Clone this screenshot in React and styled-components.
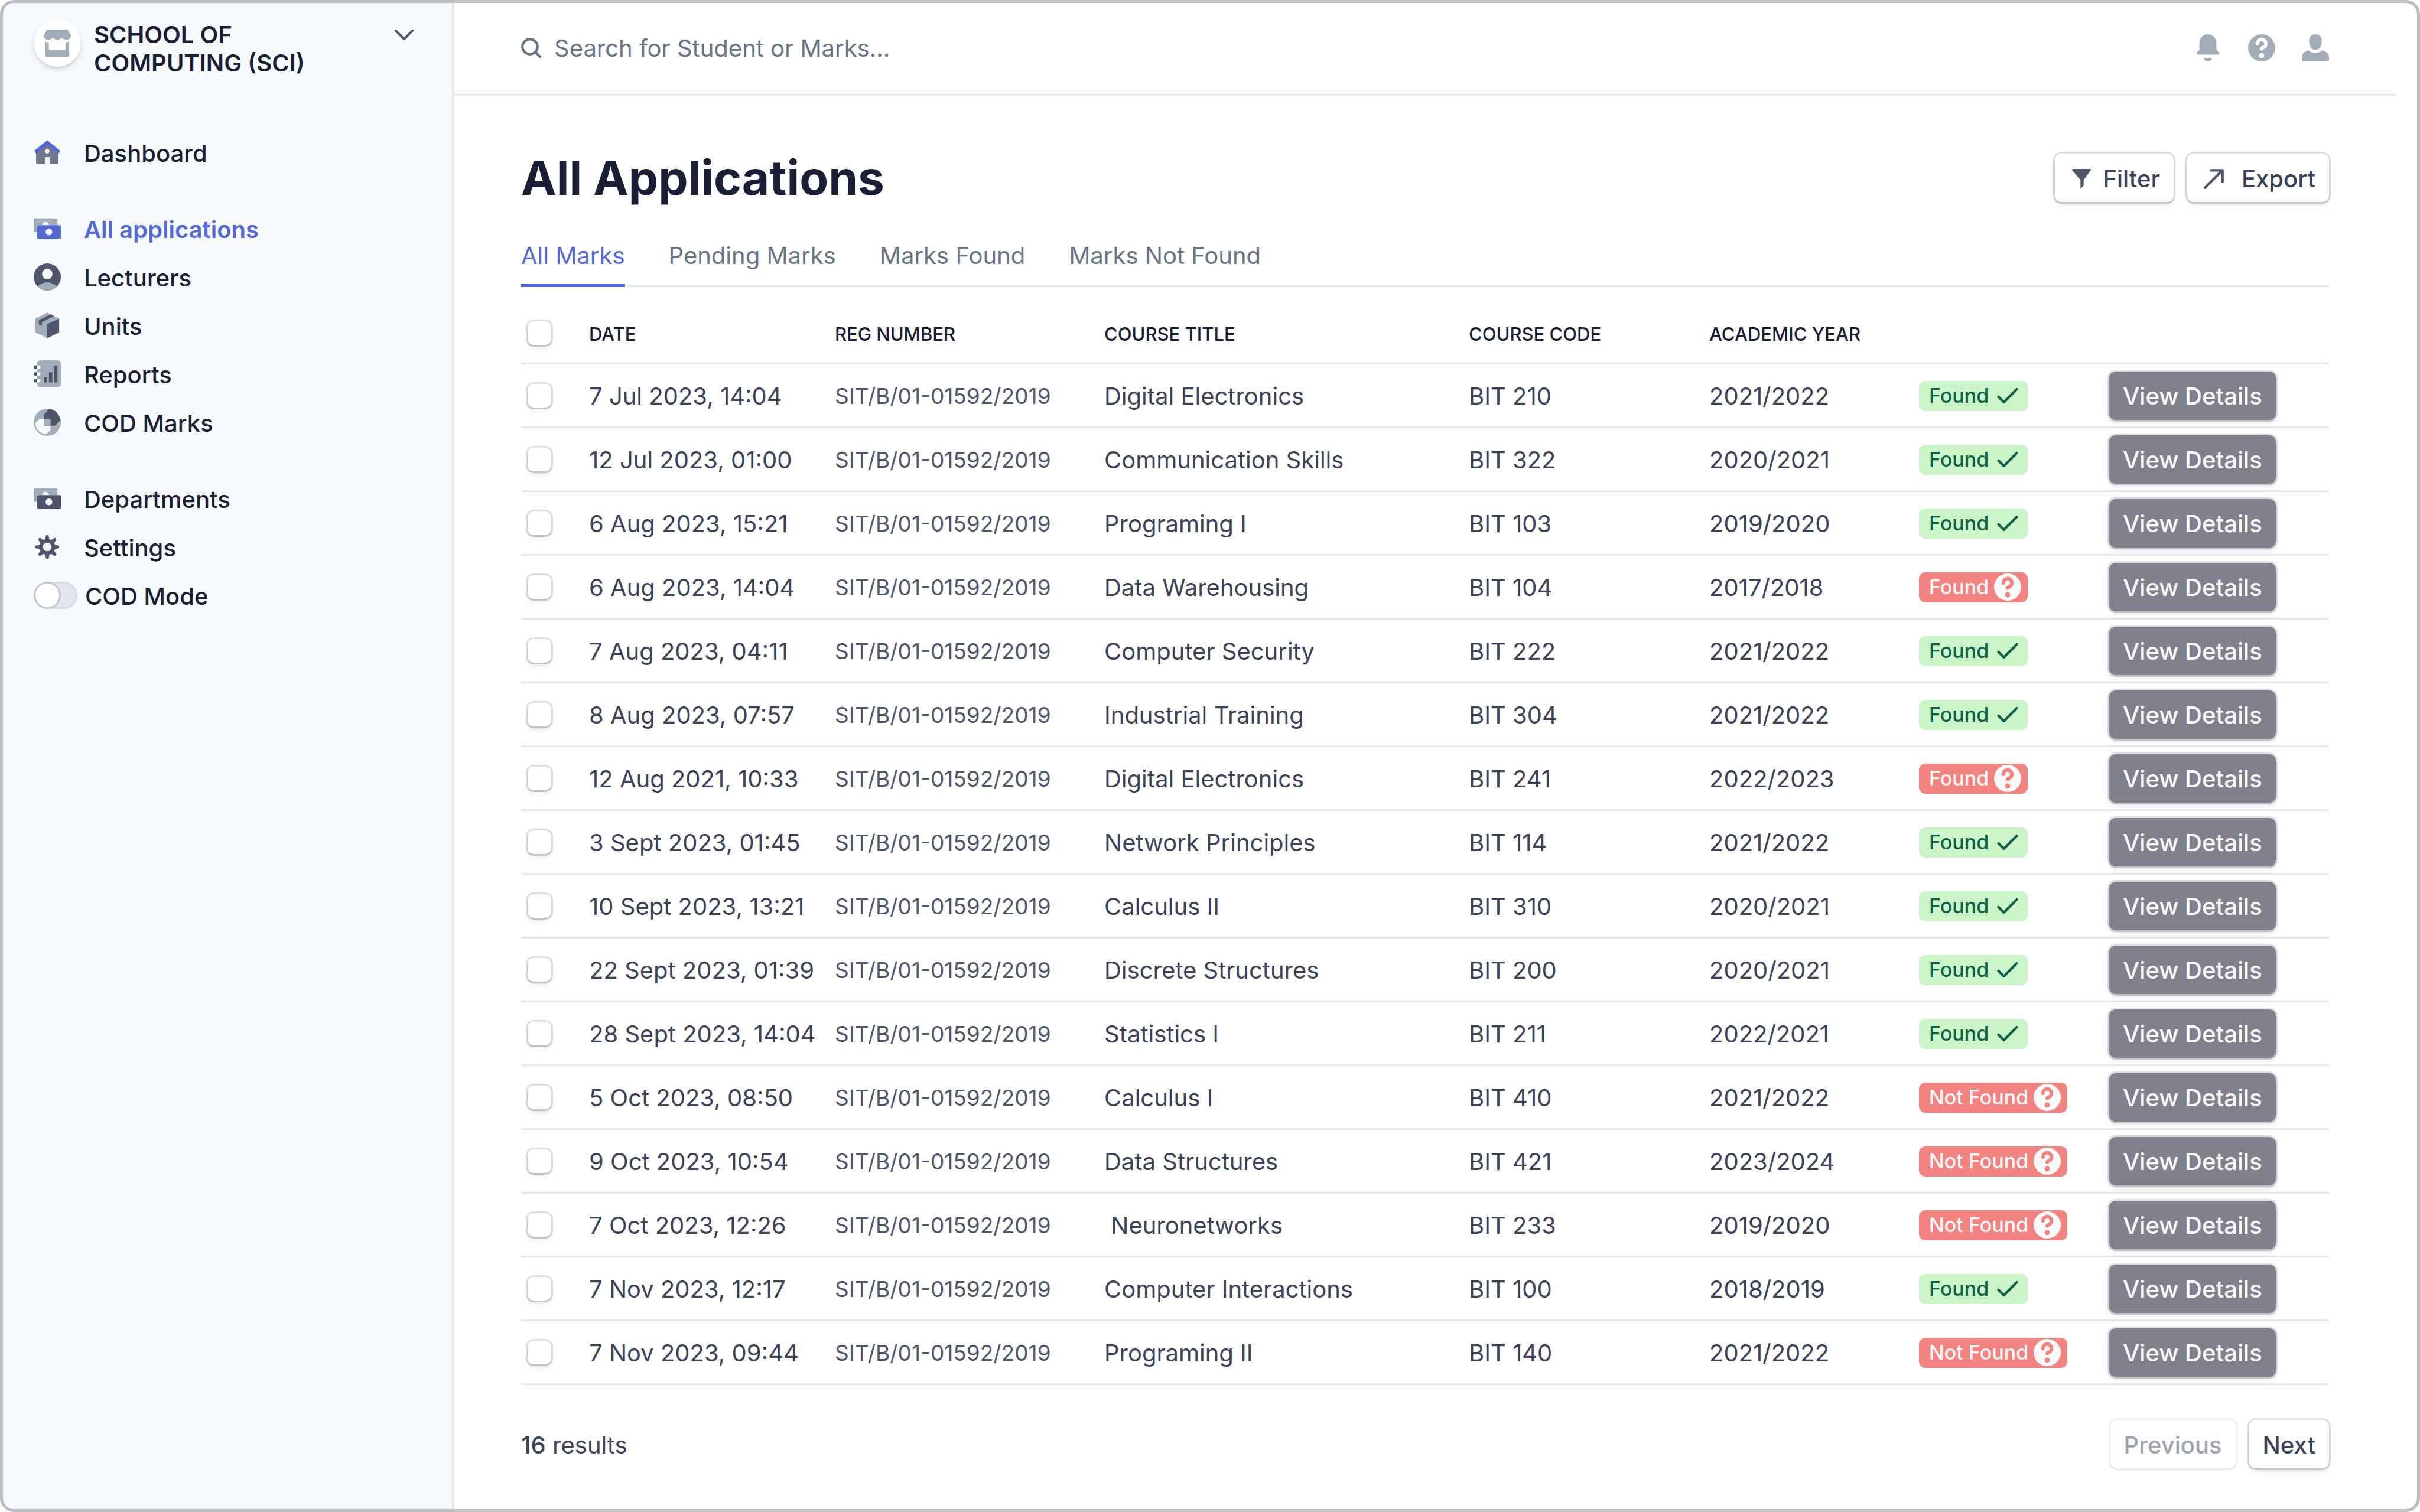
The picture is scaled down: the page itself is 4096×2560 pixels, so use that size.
import React from "react";
import styled, { createGlobalStyle, css } from "styled-components";

const color = {
  ink: "#1a1f36",
  text: "#3c4257",
  muted: "#4f566b",
  soft: "#697386",
  icon: "#a3acb9",
  line: "#e3e8ee",
  brand: "#5469d4",
};

const GlobalStyle = createGlobalStyle`
  *, *::before, *::after { box-sizing: border-box; }
  body {
    margin: 0;
    background: #ffffff;
    color: ${color.text};
    font-family: Inter, "Liberation Sans", sans-serif;
    font-size: 40px;
    line-height: 48px;
  }
  button, input { font: inherit; color: inherit; margin: 0; }
  a { color: inherit; text-decoration: none; }
`;

const outline = css`
  box-shadow: 0 0 0 3px rgba(60, 66, 87, 0.16), 0 3px 3px rgba(0, 0, 0, 0.12),
    0 6px 14px rgba(60, 66, 87, 0.08);
`;

const Frame = styled.div`
  display: flex;
  min-height: 100vh;
  border: 5px solid #bdbdbd;
  border-radius: 24px;
  overflow: hidden;
`;

const Sidebar = styled.aside`
  flex: none;
  width: 763px;
  padding: 28px 64px 28px 52px;
  background: #f6fafd;
  border-right: 3px solid ${color.line};
`;

const School = styled.button`
  display: flex;
  align-items: flex-start;
  width: 100%;
  height: 184px;
  padding: 0;
  border: 0;
  background: none;
  color: ${color.ink};
  font-weight: 600;
  text-align: left;
`;

const Avatar = styled.span`
  display: flex;
  flex: none;
  align-items: center;
  justify-content: center;
  width: 80px;
  height: 80px;
  margin-right: 22px;
  border-radius: 50%;
  background: #ffffff;
  box-shadow: 0 3px 4px rgba(0, 0, 0, 0.12), 0 6px 14px rgba(60, 66, 87, 0.08);
`;

const SchoolName = styled.span`
  flex: 1;
  max-width: 400px;
  padding-top: 2px;
`;

const ChevronSlot = styled.span`
  display: flex;
  align-items: center;
  height: 52px;
  margin-left: auto;
`;

const Nav = styled.nav`
  display: flex;
  flex-direction: column;
  gap: 47px;
`;

const NavGroup = styled.ul`
  margin: 0;
  padding: 0;
  list-style: none;
`;

const NavItem = styled.li`
  display: flex;
  align-items: center;
  height: 82px;
  color: ${color.ink};
  font-weight: 500;
`;

const NavLink = styled.a`
  display: flex;
  align-items: center;
  gap: 39px;
  color: ${(p) => (p.$active ? color.brand : "inherit")};
  font-weight: ${(p) => (p.$active ? 600 : 500)};
`;

const NavText = styled.span`
  padding-top: 3px;
`;

const ToggleLabel = styled.label`
  display: flex;
  align-items: center;
  gap: 13px;
`;

const Toggle = styled.input`
  appearance: none;
  width: 74px;
  height: 46px;
  border: 3px solid #d9dbe0;
  border-radius: 23px;
  background: #e1e6ee;
  &::before {
    content: "";
    display: block;
    width: 46px;
    height: 46px;
    margin: -3px;
    border: 3px solid #c4c7cf;
    border-radius: 50%;
    background: #ffffff;
  }
  &:checked::before {
    margin-left: 25px;
  }
`;

const Main = styled.main`
  flex: 1;
  min-width: 0;
`;

const TopBar = styled.header`
  display: flex;
  align-items: center;
  justify-content: space-between;
  height: 157px;
  margin-right: 35px;
  padding: 0 114px 3px;
  border-bottom: 3px solid ${color.line};
`;

const SearchLabel = styled.label`
  display: flex;
  flex: 1;
  align-items: center;
  gap: 22px;
  color: ${color.soft};
`;

const SearchInput = styled.input`
  flex: 1;
  padding: 3px 0 0;
  border: 0;
  outline: 0;
  background: none;
  &::placeholder {
    color: ${color.soft};
    opacity: 1;
  }
`;

const TopActions = styled.div`
  display: flex;
  gap: 45px;
`;

const IconButton = styled.button`
  display: flex;
  padding: 0;
  border: 0;
  background: none;
`;

const Content = styled.div`
  padding: 91px 149px 0 114px;
`;

const TitleRow = styled.div`
  display: flex;
  align-items: center;
  justify-content: space-between;
`;

const Title = styled.h1`
  margin: 0;
  color: ${color.ink};
  font-size: 80px;
  font-weight: 700;
  line-height: 96px;
`;

const ButtonGroup = styled.div`
  display: flex;
  gap: 23px;
`;

const Button = styled.button`
  display: flex;
  align-items: center;
  gap: ${(p) => p.$gap || 0}px;
  height: 82px;
  padding: 3px 23px 0;
  padding-left: ${(p) => (p.$gap ? 28 : 23)}px;
  border: 0;
  border-radius: 11px;
  background: #ffffff;
  color: ${color.text};
  font-weight: 500;
  white-space: nowrap;
  ${outline}
  &:disabled {
    color: #a0a3b1;
    box-shadow: 0 0 0 3px rgba(60, 66, 87, 0.08), 0 3px 3px rgba(0, 0, 0, 0.05);
  }
`;

const DetailsButton = styled(Button)`
  background: #80818d;
  color: #fafafa;
`;

const Tabs = styled.nav`
  display: flex;
  gap: 74px;
  margin-top: 55px;
  box-shadow: inset 0 -3px 0 ${color.line};
`;

const Tab = styled.a`
  padding: 5px 0 23px;
  border-bottom: 6px solid ${(p) => (p.$active ? color.brand : "transparent")};
  color: ${(p) => (p.$active ? color.brand : color.soft)};
  font-weight: 400;
`;

const Table = styled.table`
  width: 100%;
  table-layout: fixed;
  border-collapse: separate;
  border-spacing: 0;
`;

const Col = styled.col`
  width: ${(p) => (p.$width ? `${p.$width}px` : "auto")};
`;

const HeadCell = styled.th`
  height: 131px;
  padding: 32px 0 0;
  border-bottom: 3px solid ${color.line};
  color: ${color.ink};
  font-size: 31px;
  font-weight: 500;
  text-align: left;
`;

const HeadCheckCell = styled(HeadCell)`
  padding: 28px 0 0;
`;

const Cell = styled.td`
  height: 108px;
  padding: 0;
  border-bottom: 3px solid ${color.line};
`;

const TextCell = styled(Cell)`
  padding-top: 3px;
  white-space: pre;
`;

const RegCell = styled(TextCell)`
  color: ${color.muted};
  font-size: 37px;
`;

const Checkbox = styled.input`
  appearance: none;
  display: block;
  width: 40px;
  height: 40px;
  margin-left: 11px;
  border-radius: 10px;
  background: #ffffff;
  ${outline}
  &:checked {
    background: ${color.brand};
  }
`;

const Badge = styled.span`
  display: inline-flex;
  align-items: center;
  gap: 9px;
  height: 51px;
  padding: 0 11px 0 17px;
  border-radius: 11px;
  background: ${(p) => (p.$ok ? "#cbf4c9" : "#f38381")};
  color: ${(p) => (p.$ok ? "#0e6245" : "#fafafa")};
  font-size: 34px;
  font-weight: 500;
  white-space: nowrap;
  vertical-align: middle;
`;

const Footer = styled.footer`
  display: flex;
  align-items: center;
  justify-content: space-between;
  padding: 59px 0;
`;

const Results = styled.span`
  padding-top: 3px;
`;

const Count = styled.b`
  font-weight: 500;
`;

const Svg = styled.svg`
  display: block;
  flex: none;
  width: ${(p) => p.$size}px;
  height: ${(p) => p.$size}px;
`;

const Icon = ({ children, size = 46, box = 16, fill = color.icon }) => (
  <Svg $size={size} viewBox={`0 0 ${box} ${box}`} fill={fill} aria-hidden="true">
    {children}
  </Svg>
);

const StoreIcon = () => (
  <Icon>
    <path d="M2.6 0h10.8c.4 0 .7.2.9.5L15.800 3c.4.9 0 2-.9 2.600-1.300.8-3 .5-4.300-.7C9.900 5.700 9 6.100 8 6.100s-1.900-.4-2.600-1.200C4.100 6.100 2.400 6.400 1.100 5.600.2 5-.2 3.900.2 3L1.700.5c.2-.3.5-.5.9-.5z" />
    <path d="M1 7.100c.7.300 1.300.5 2 .5V12h10V7.600c.7 0 1.300-.2 2-.5v8.100a.8.8 0 0 1-.8.8H1.800a.8.8 0 0 1-.8-.8z" />
  </Icon>
);

const HomeIcon = () => (
  <Icon fill="#70778a">
    <path
      fillRule="evenodd"
      d="M8 3.200l6.500 5v5.900a.7.7 0 0 1-.7.7H9.400v-3.500a.5.5 0 0 0-.5-.5H7.100a.5.5 0 0 0-.5.5v3.500H2.100a.7.7 0 0 1-.7-.7V8.200zM8 6a1.300 1.300 0 1 0 0 2.600A1.300 1.300 0 0 0 8 6z"
    />
    <path
      fill={color.brand}
      d="M7.500 1.200a.8.8 0 0 1 1 0l6.900 5.700a.5.5 0 0 1 .1.6l-.7.900a.4.400 0 0 1-.6.1L8 3.650 1.800 8.500a.4.400 0 0 1-.6-.1l-.7-.9a.5.5 0 0 1 .1-.6z"
    />
  </Icon>
);

const CashIcon = ({ fill = color.muted }) => (
  <Icon>
    <path
      fillRule="evenodd"
      d="M.8 2h12.400a.8.8 0 0 1 .8.8V6H9A2 2 0 0 0 5 6H2v4H.8a.8.8 0 0 1-.8-.8V2.800A.8.8 0 0 1 .8 2z"
    />
    <path
      fill={fill}
      fillRule="evenodd"
      d="M2.800 6h12.400a.8.8 0 0 1 .8.8v6.400a.8.8 0 0 1-.8.8H2.800a.8.8 0 0 1-.8-.8V6.800A.8.8 0 0 1 2.800 6zM9 8a2 2 0 1 0 0 4 2 2 0 0 0 0-4z"
    />
  </Icon>
);

const LecturerIcon = () => (
  <Icon>
    <path
      fill={color.muted}
      fillRule="evenodd"
      d="M8 0a8 8 0 1 1 0 16A8 8 0 0 1 8 0zm0 3.100a3.100 3.100 0 1 0 0 6.200 3.100 3.100 0 0 0 0-6.200z"
    />
    <path d="M2.300 13.550C3.700 12.100 5.800 11.100 8 11.100s4.300 1 5.700 2.450A8 8 0 0 1 8 16a8 8 0 0 1-5.700-2.450z" />
  </Icon>
);

const BoxIcon = () => (
  <Icon>
    <path d="M7.600.6a1 1 0 0 1 .8 0L15 4v8.200l-7 3.300-7-3.300V4z" />
    <path fill={color.muted} d="M8 7.200L15 4v7.700c0 .3-.2.5-.4.6L8 15.500z" />
    <path fill={color.muted} d="M10.100 1.500l1.900 1-7.100 3.500v2.300L3 7.400V4.900z" />
  </Icon>
);

const ReportIcon = () => (
  <Icon>
    <path
      fillRule="evenodd"
      d="M4 0h10a2 2 0 0 1 2 2v12a2 2 0 0 1-2 2H4a2 2 0 0 1-2-2v-1h1a1 1 0 0 0 0-2H2V9h1a1 1 0 0 0 0-2H2V5h1a1 1 0 0 0 0-2H2V2a2 2 0 0 1 2-2z"
    />
    <path
      fill={color.muted}
      d="M1 3h1v2H1a1 1 0 0 1 0-2zM1 7h1v2H1a1 1 0 0 1 0-2zM1 11h1v2H1a1 1 0 0 1 0-2zM6 10h2v3H6zM9 7h2v6H9zM12 3h2v10h-2z"
    />
  </Icon>
);

const MarksIcon = () => (
  <Icon>
    <circle cx="8" cy="8" r="8" />
    <path
      fill="#f6fafd"
      d="M3.400 6H10v6.400L7.700 14.900C4 15 1 12.200 1 8.500z"
    />
    <path fill={color.muted} d="M9.200.100a8 8 0 0 1 6.600 6.600L12.600 10H6V3.500z" />
    <path d="M6 6h4v4H6z" />
  </Icon>
);

const GearIcon = () => (
  <Icon fill={color.muted}>
    {[0, 45, 90, 135, 180, 225, 270, 315].map((angle) => (
      <path
        key={angle}
        transform={`rotate(${angle} 8 8)`}
        d="M7.200 1.300Q7.300 1 7.600 1h.8q.3 0 .4.300L9.200 3.300q.2.700 1 .9L8 6 5.800 4.200q.8-.2 1-.9z"
      />
    ))}
    <circle cx="8" cy="8" r="3.600" fill="none" stroke={color.muted} strokeWidth="2.100" />
    <circle cx="8" cy="8" r="2.550" fill="#f6fafd" />
  </Icon>
);

const ChevronIcon = () => (
  <Icon size={34} box={12} fill="none">
    <path
      d="M1 3.500L6 8.500l5-5"
      stroke={color.muted}
      strokeWidth="1.400"
      strokeLinecap="round"
      strokeLinejoin="round"
    />
  </Icon>
);

const SearchIcon = () => (
  <Icon size={34} box={12} fill="none">
    <g stroke={color.soft} strokeWidth="1.500" strokeLinecap="round">
      <circle cx="5.300" cy="5.300" r="4.500" />
      <path d="M8.700 8.700l2.600 2.600" />
    </g>
  </Icon>
);

const BellIcon = () => (
  <Icon>
    <path d="M8 0c2.800 0 5 2.200 5 5v4.100l1.400 1.400c.3.300.3.700.2 1-.1.300-.4.500-.8.500H2.200c-.4 0-.7-.2-.8-.5-.1-.3-.1-.7.2-1L3 9.100V5c0-2.800 2.200-5 5-5zM5.600 14h4.800c-.3 1.200-1.200 2-2.400 2s-2.100-.8-2.400-2z" />
  </Icon>
);

const QuestionIcon = ({ fill = color.icon, mark = "#ffffff" }) => (
  <Icon fill={fill}>
    <circle cx="8" cy="8" r="8" />
    <path
      d="M5.500 5.600A2.500 2.500 0 1 1 9.200 7.700C8.400 8.100 8 8.200 8 8.500"
      fill="none"
      stroke={mark}
      strokeWidth="2.100"
      strokeLinecap="round"
    />
    <circle cx="8" cy="12.500" r="1.550" fill={mark} />
  </Icon>
);

const UserIcon = () => (
  <Icon>
    <path d="M8 0c2.300 0 3.700 1.600 3.700 3.700C11.700 6.900 10.600 9.100 8 9.100S4.300 6.900 4.300 3.700C4.300 1.600 5.700 0 8 0z" />
    <path d="M4.100 9.500C5 10.500 6.400 11 8 11s3-.5 3.900-1.500c2.300.5 4.100 1.800 4.100 3.900v1.800a.8.8 0 0 1-.8.8H.8a.8.800 0 0 1-.8-.8v-1.800c0-2.100 1.800-3.400 4.100-3.900z" />
  </Icon>
);

const FilterIcon = () => (
  <Icon size={34} box={12} fill={color.muted}>
    <path d="M1 0h10c.5 0 .7.500.5.900L7.300 6.600v3.200L5.400 12V6.600L.500.9C.3.500.5 0 1 0z" />
  </Icon>
);

const ExportIcon = () => (
  <Icon size={34} box={12} fill="none">
    <path
      d="M.8 11.200L11 1M4.300.8h6.900v6.900"
      stroke={color.muted}
      strokeWidth="1.500"
      strokeLinecap="round"
      strokeLinejoin="round"
    />
  </Icon>
);

const CheckIcon = () => (
  <Icon fill="none">
    <path
      d="M2.600 8.600l3.200 3.200 7.600-7.600"
      stroke="#0e6245"
      strokeWidth="1.500"
      strokeLinecap="round"
      strokeLinejoin="round"
    />
  </Icon>
);

const navGroups = [
  [{ label: "Dashboard", icon: <HomeIcon /> }],
  [
    { label: "All applications", icon: <CashIcon fill={color.brand} />, active: true },
    { label: "Lecturers", icon: <LecturerIcon /> },
    { label: "Units", icon: <BoxIcon /> },
    { label: "Reports", icon: <ReportIcon /> },
    { label: "COD Marks", icon: <MarksIcon /> },
  ],
  [
    { label: "Departments", icon: <CashIcon /> },
    { label: "Settings", icon: <GearIcon /> },
    { label: "COD Mode", toggle: true },
  ],
];

const tabs = ["All Marks", "Pending Marks", "Marks Found", "Marks Not Found"];

const columns = [115, 416, 456, 0, 407, 355, 322, 372];

const REG = "SIT/B/01-01592/2019";

const rows = [
  ["7 Jul 2023, 14:04", "Digital Electronics", "BIT 210", "2021/2022", "Found", true],
  ["12 Jul 2023, 01:00", "Communication Skills", "BIT 322", "2020/2021", "Found", true],
  ["6 Aug 2023, 15:21", "Programing I", "BIT 103", "2019/2020", "Found", true],
  ["6 Aug 2023, 14:04", "Data Warehousing", "BIT 104", "2017/2018", "Found", false],
  ["7 Aug 2023, 04:11", "Computer Security", "BIT 222", "2021/2022", "Found", true],
  ["8 Aug 2023, 07:57", "Industrial Training", "BIT 304", "2021/2022", "Found", true],
  ["12 Aug 2021, 10:33", "Digital Electronics", "BIT 241", "2022/2023", "Found", false],
  ["3 Sept 2023, 01:45", "Network Principles", "BIT 114", "2021/2022", "Found", true],
  ["10 Sept 2023, 13:21", "Calculus II", "BIT 310", "2020/2021", "Found", true],
  ["22 Sept 2023, 01:39", "Discrete Structures", "BIT 200", "2020/2021", "Found", true],
  ["28 Sept 2023, 14:04", "Statistics I", "BIT 211", "2022/2021", "Found", true],
  ["5 Oct 2023, 08:50", "Calculus I", "BIT 410", "2021/2022", "Not Found", false],
  ["9 Oct 2023, 10:54", "Data Structures", "BIT 421", "2023/2024", "Not Found", false],
  ["7 Oct 2023, 12:26", " Neuronetworks", "BIT 233", "2019/2020", "Not Found", false],
  ["7 Nov 2023, 12:17", "Computer Interactions", "BIT 100", "2018/2019", "Found", true],
  ["7 Nov 2023, 09:44", "Programing II", "BIT 140", "2021/2022", "Not Found", false],
];

export default function App() {
  return (
    <>
      <GlobalStyle />
      <Frame>
        <Sidebar>
          <School type="button">
            <Avatar>
              <StoreIcon />
            </Avatar>
            <SchoolName>
              SCHOOL OF
              <br />
              COMPUTING (SCI)
            </SchoolName>
            <ChevronSlot>
              <ChevronIcon />
            </ChevronSlot>
          </School>
          <Nav>
            {navGroups.map((group) => (
              <NavGroup key={group[0].label}>
                {group.map((item) => (
                  <NavItem key={item.label}>
                    {item.toggle ? (
                      <ToggleLabel>
                        <Toggle type="checkbox" />
                        <NavText>{item.label}</NavText>
                      </ToggleLabel>
                    ) : (
                      <NavLink href="#" $active={item.active}>
                        {item.icon}
                        <NavText>{item.label}</NavText>
                      </NavLink>
                    )}
                  </NavItem>
                ))}
              </NavGroup>
            ))}
          </Nav>
        </Sidebar>
        <Main>
          <TopBar>
            <SearchLabel>
              <SearchIcon />
              <SearchInput type="text" placeholder="Search for Student or Marks..." />
            </SearchLabel>
            <TopActions>
              <IconButton type="button">
                <BellIcon />
              </IconButton>
              <IconButton type="button">
                <QuestionIcon />
              </IconButton>
              <IconButton type="button">
                <UserIcon />
              </IconButton>
            </TopActions>
          </TopBar>
          <Content>
            <TitleRow>
              <Title>All Applications</Title>
              <ButtonGroup>
                <Button type="button" $gap={19}>
                  <FilterIcon />
                  Filter
                </Button>
                <Button type="button" $gap={30}>
                  <ExportIcon />
                  Export
                </Button>
              </ButtonGroup>
            </TitleRow>
            <Tabs>
              {tabs.map((tab, i) => (
                <Tab key={tab} href="#" $active={i === 0}>
                  {tab}
                </Tab>
              ))}
            </Tabs>
            <Table>
              <colgroup>
                {columns.map((width, i) => (
                  <Col key={i} $width={width} />
                ))}
              </colgroup>
              <thead>
                <tr>
                  <HeadCheckCell>
                    <Checkbox type="checkbox" />
                  </HeadCheckCell>
                  <HeadCell>DATE</HeadCell>
                  <HeadCell>REG NUMBER</HeadCell>
                  <HeadCell>COURSE TITLE</HeadCell>
                  <HeadCell>COURSE CODE</HeadCell>
                  <HeadCell>ACADEMIC YEAR</HeadCell>
                  <HeadCell />
                  <HeadCell />
                </tr>
              </thead>
              <tbody>
                {rows.map(([date, title, code, year, status, ok]) => (
                  <tr key={date}>
                    <Cell>
                      <Checkbox type="checkbox" />
                    </Cell>
                    <TextCell>{date}</TextCell>
                    <RegCell>{REG}</RegCell>
                    <TextCell>{title}</TextCell>
                    <TextCell>{code}</TextCell>
                    <TextCell>{year}</TextCell>
                    <Cell>
                      <Badge $ok={ok}>
                        {status}
                        {ok ? <CheckIcon /> : <QuestionIcon fill="#fafafa" mark="#f38381" />}
                      </Badge>
                    </Cell>
                    <Cell>
                      <DetailsButton type="button">View Details</DetailsButton>
                    </Cell>
                  </tr>
                ))}
              </tbody>
            </Table>
            <Footer>
              <Results>
                <Count>16</Count> results
              </Results>
              <ButtonGroup>
                <Button type="button" disabled>
                  Previous
                </Button>
                <Button type="button">Next</Button>
              </ButtonGroup>
            </Footer>
          </Content>
        </Main>
      </Frame>
    </>
  );
}
